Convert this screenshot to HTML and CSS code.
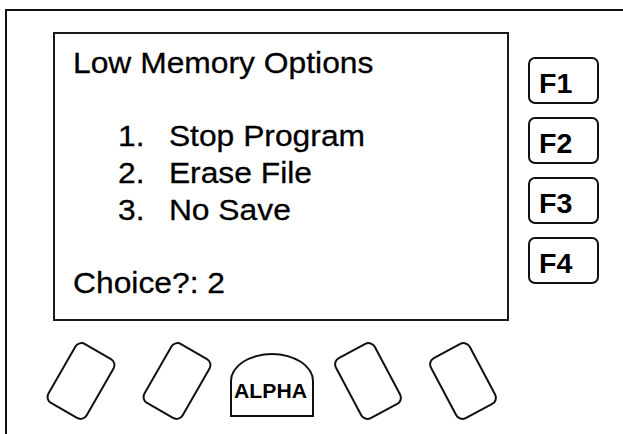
FILE: index.html
```html
<!DOCTYPE html>
<html lang="en">

<head>
    <meta charset="UTF-8">
    <meta name="viewport" content="width=device-width, initial-scale=1.0">
    <title>Low Memory Options</title>
    <link rel="stylesheet" href="styles.css">
</head>

<body>
    <div class="device">
        <div class="top">
            <div class="screen">
                <div class="line title">Low Memory Options</div>
                <ol class="options">
                    <li class="line"><span class="num">1.</span>Stop Program</li>
                    <li class="line"><span class="num">2.</span>Erase File</li>
                    <li class="line"><span class="num">3.</span>No Save</li>
                </ol>
                <div class="line choice">Choice?: 2</div>
            </div>
            <div class="fkeys">
                <div class="fkey"><span class="label">F1</span></div>
                <div class="fkey"><span class="label">F2</span></div>
                <div class="fkey"><span class="label">F3</span></div>
                <div class="fkey"><span class="label">F4</span></div>
            </div>
        </div>
        <div class="softkeys">
            <div class="slot"><div class="soft left"></div></div>
            <div class="slot"><div class="soft left"></div></div>
            <div class="slot"><div class="alpha"><span class="label">ALPHA</span></div></div>
            <div class="slot"><div class="soft right"></div></div>
            <div class="slot"><div class="soft right"></div></div>
        </div>
    </div>
</body>

</html>
```

FILE: styles.css
```css
html,
body {
    margin: 0;
    height: 100%;
    overflow: hidden;
    background: #fff;
}

body {
    font-family: "Liberation Sans", Arial, sans-serif;
    color: #000;
}

/* outer case, runs off the right and bottom edge */
.device {
    width: 700px;
    height: 500px;
    margin: 9px 0 0 5px;
    border-top: 2px solid #111;
    border-left: 2px solid #111;
}

.top {
    display: flex;
    gap: 19px;
    margin: 21px 0 0 46px;
}

.screen {
    width: 456px;
    height: 289px;
    box-sizing: border-box;
    border: 2px solid #1a1a1a;
    padding: 10px 0 18px 18px;
    display: flex;
    flex-direction: column;
    font-size: 30px;
    line-height: 37px;
    -webkit-text-stroke: 0.3px #000;
}

/* the lettering in the picture is a little wider than Arial */
.line,
.label {
    display: block;
    transform: scaleX(1.06);
    transform-origin: 0 0;
}

.options {
    list-style: none;
    margin: 36px 0 0 45px;
    padding: 0;
}

.options .num {
    display: inline-block;
    width: 48px;
}

.choice {
    margin-top: auto;
}

.fkeys {
    display: flex;
    flex-direction: column;
    gap: 13px;
    padding-top: 25px;
}

.fkey {
    width: 71px;
    height: 47px;
    box-sizing: border-box;
    border: 2px solid #111;
    border-radius: 7px;
    padding: 12px 0 0 9px;
    font-size: 27px;
    line-height: 27px;
    font-weight: bold;
}

.softkeys {
    display: flex;
    height: 82px;
    margin: 19px 0 0 26.5px;
}

.slot {
    width: 95.5px;
    display: flex;
    align-items: center;
    justify-content: center;
}

.soft {
    width: 46px;
    height: 70px;
    box-sizing: border-box;
    border: 2px solid #111;
    border-radius: 8px;
}

.soft.left {
    transform: rotate(30deg);
}

.soft.right {
    transform: rotate(-28deg);
}

.alpha {
    width: 84px;
    height: 64px;
    margin-top: 7px;
    box-sizing: border-box;
    border: 2px solid #111;
    border-radius: 42px 42px 0 0 / 28px 28px 0 0;
    padding: 27px 0 0 2px;
    font-size: 20px;
    line-height: 19px;
    font-weight: bold;
}
```
